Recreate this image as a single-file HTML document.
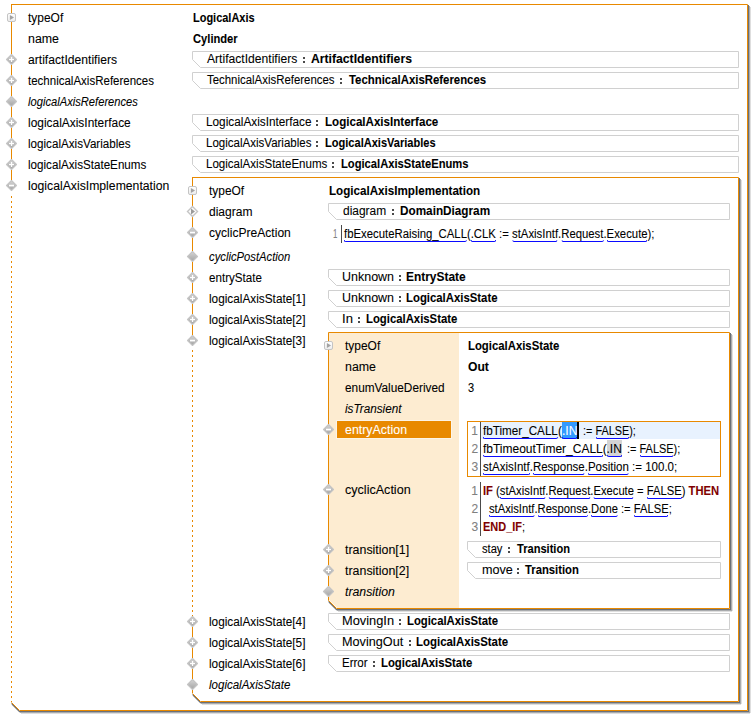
<!DOCTYPE html>
<html><head><meta charset="utf-8"><style>
html,body{margin:0;padding:0;background:#fff;}
body{width:753px;height:720px;position:relative;overflow:hidden;font-family:"Liberation Sans",sans-serif;font-size:12px;color:#000000;}
svg{position:absolute;left:0;top:0;}
.t{position:absolute;line-height:14px;white-space:pre;transform-origin:0 0;-webkit-text-stroke:0.08px currentColor;}
b{font-weight:bold;}
.ln{color:#808080;}
.kw{color:#7f0000;font-weight:bold;}
.wh{color:#fff;}
.u{position:relative;}
.u::after{content:"";position:absolute;left:0;right:0;bottom:-1px;height:1px;border:1px solid #0a0aff;border-top:none;border-radius:0 0 2px 2px;}
.sel{background:#3399ff;color:#fff;}
.cur{display:inline-block;width:2px;height:14px;background:#000;vertical-align:top;}
.occ{background:#d4d4d4;}
</style></head><body>
<svg width="753" height="720"><defs>
<linearGradient id="dg" x1="0" y1="0" x2="0" y2="1"><stop offset="0" stop-color="#d6d6d6"/><stop offset="1" stop-color="#a2a2a2"/></linearGradient>
<linearGradient id="sg" x1="0" y1="0" x2="0" y2="1"><stop offset="0" stop-color="#ffffff"/><stop offset="1" stop-color="#ececec"/></linearGradient>
</defs>
<rect x="748" y="5" width="1" height="707" fill="#6b7077"/><rect x="749" y="6" width="1" height="707" fill="#a9abad"/><rect x="750" y="7" width="1" height="706" fill="#dedede"/><rect x="19" y="711" width="730" height="1" fill="#6b7077"/><rect x="20" y="712" width="730" height="1" fill="#a9abad"/><rect x="21" y="713" width="729" height="1" fill="#dedede"/><path d="M11.5 703.5 L19.5 711.5" stroke="#6b7077" stroke-width="1" fill="none"/><path d="M11.5 704.5 L19.5 712.5" stroke="#bcbcbc" stroke-width="1" fill="none"/><path d="M11.5 4.5 H747.5 V710.5 H19.5 L11.5 702.5 Z" fill="#fff" stroke="none"/><path d="M11.5 4.5 H747.5 V710.5 H19.5 L11.5 702.5" fill="none" stroke="#e88900" stroke-width="1"/><path d="M11.5 4 V190" stroke="#e88900" stroke-width="1" fill="none"/><path d="M11.5 196 V702" stroke="#e88900" stroke-width="1" stroke-dasharray="2 3" fill="none"/><path d="M192.5 59.5 V51.5 H738.5 V67.5 H200.5 Z" fill="#fff" stroke="#d0d0d0" stroke-width="1"/><rect x="303" y="57" width="2" height="2" fill="#4a4a4a"/><rect x="303" y="61" width="2" height="2" fill="#4a4a4a"/><path d="M192.5 80.5 V72.5 H738.5 V88.5 H200.5 Z" fill="#fff" stroke="#d0d0d0" stroke-width="1"/><rect x="340" y="78" width="2" height="2" fill="#4a4a4a"/><rect x="340" y="82" width="2" height="2" fill="#4a4a4a"/><path d="M192.5 122.5 V114.5 H738.5 V130.5 H200.5 Z" fill="#fff" stroke="#d0d0d0" stroke-width="1"/><rect x="316" y="120" width="2" height="2" fill="#4a4a4a"/><rect x="316" y="124" width="2" height="2" fill="#4a4a4a"/><path d="M192.5 143.5 V135.5 H738.5 V151.5 H200.5 Z" fill="#fff" stroke="#d0d0d0" stroke-width="1"/><rect x="316" y="141" width="2" height="2" fill="#4a4a4a"/><rect x="316" y="145" width="2" height="2" fill="#4a4a4a"/><path d="M192.5 164.5 V156.5 H738.5 V172.5 H200.5 Z" fill="#fff" stroke="#d0d0d0" stroke-width="1"/><rect x="332" y="162" width="2" height="2" fill="#4a4a4a"/><rect x="332" y="166" width="2" height="2" fill="#4a4a4a"/><rect x="739" y="178" width="1" height="525" fill="#6b7077"/><rect x="740" y="179" width="1" height="525" fill="#a9abad"/><rect x="741" y="180" width="1" height="524" fill="#dedede"/><rect x="200" y="702" width="540" height="1" fill="#6b7077"/><rect x="201" y="703" width="540" height="1" fill="#a9abad"/><rect x="202" y="704" width="539" height="1" fill="#dedede"/><path d="M192.5 694.5 L200.5 702.5" stroke="#6b7077" stroke-width="1" fill="none"/><path d="M192.5 695.5 L200.5 703.5" stroke="#bcbcbc" stroke-width="1" fill="none"/><path d="M192.5 177.5 H738.5 V701.5 H200.5 L192.5 693.5 Z" fill="#fff" stroke="none"/><path d="M192.5 177.5 H738.5 V701.5 H200.5 L192.5 693.5" fill="none" stroke="#e88900" stroke-width="1"/><path d="M192.5 177 V344" stroke="#e88900" stroke-width="1" fill="none"/><path d="M192.5 350 V617" stroke="#e88900" stroke-width="1" stroke-dasharray="2 3" fill="none"/><path d="M192.5 617 V693" stroke="#e88900" stroke-width="1" fill="none"/><path d="M328.5 211.5 V203.5 H729.5 V219.5 H336.5 Z" fill="#fff" stroke="#d0d0d0" stroke-width="1"/><rect x="392" y="209" width="2" height="2" fill="#4a4a4a"/><rect x="392" y="213" width="2" height="2" fill="#4a4a4a"/><path d="M328.5 277.5 V269.5 H729.5 V285.5 H336.5 Z" fill="#fff" stroke="#d0d0d0" stroke-width="1"/><rect x="399" y="275" width="2" height="2" fill="#4a4a4a"/><rect x="399" y="279" width="2" height="2" fill="#4a4a4a"/><path d="M328.5 298.5 V290.5 H729.5 V306.5 H336.5 Z" fill="#fff" stroke="#d0d0d0" stroke-width="1"/><rect x="399" y="296" width="2" height="2" fill="#4a4a4a"/><rect x="399" y="300" width="2" height="2" fill="#4a4a4a"/><path d="M328.5 319.5 V311.5 H729.5 V327.5 H336.5 Z" fill="#fff" stroke="#d0d0d0" stroke-width="1"/><rect x="358" y="317" width="2" height="2" fill="#4a4a4a"/><rect x="358" y="321" width="2" height="2" fill="#4a4a4a"/><path d="M328.5 621.5 V613.5 H729.5 V629.5 H336.5 Z" fill="#fff" stroke="#d0d0d0" stroke-width="1"/><rect x="399" y="619" width="2" height="2" fill="#4a4a4a"/><rect x="399" y="623" width="2" height="2" fill="#4a4a4a"/><path d="M328.5 642.5 V634.5 H729.5 V650.5 H336.5 Z" fill="#fff" stroke="#d0d0d0" stroke-width="1"/><rect x="409" y="640" width="2" height="2" fill="#4a4a4a"/><rect x="409" y="644" width="2" height="2" fill="#4a4a4a"/><path d="M328.5 663.5 V655.5 H729.5 V671.5 H336.5 Z" fill="#fff" stroke="#d0d0d0" stroke-width="1"/><rect x="373" y="661" width="2" height="2" fill="#4a4a4a"/><rect x="373" y="665" width="2" height="2" fill="#4a4a4a"/><rect x="341" y="225" width="1" height="18" fill="#4a4a4a"/><rect x="730" y="333" width="1" height="277" fill="#6b7077"/><rect x="731" y="334" width="1" height="277" fill="#a9abad"/><rect x="732" y="335" width="1" height="276" fill="#dedede"/><rect x="336" y="609" width="395" height="1" fill="#6b7077"/><rect x="337" y="610" width="395" height="1" fill="#a9abad"/><rect x="338" y="611" width="394" height="1" fill="#dedede"/><path d="M328.5 601.5 L336.5 609.5" stroke="#6b7077" stroke-width="1" fill="none"/><path d="M328.5 602.5 L336.5 610.5" stroke="#bcbcbc" stroke-width="1" fill="none"/><path d="M328.5 332.5 H729.5 V608.5 H336.5 L328.5 600.5 Z" fill="#fff" stroke="none"/><path d="M328.5 600.5 V332.5 H729.5 V608.5 H336.5 L328.5 600.5" fill="none" stroke="#e88900" stroke-width="1"/><path d="M329 333 H459 V608 H337 L329 600 Z" fill="#fdecd1"/><rect x="336" y="420" width="116" height="19" fill="#fdf4e6"/><rect x="337" y="421" width="114" height="17" fill="#e88900"/><rect x="467.5" y="421.5" width="253" height="55" fill="#fff" stroke="#e88900" stroke-width="1"/><rect x="481" y="422" width="239" height="17" fill="#e8f2fe"/><rect x="480" y="422" width="1" height="54" fill="#4a4a4a"/><rect x="562" y="422" width="15" height="17" fill="#3399ff"/><rect x="577" y="422" width="2" height="17" fill="#000"/><rect x="607" y="440" width="15" height="17" fill="#d4d4d4"/><rect x="480" y="482" width="1" height="54" fill="#4a4a4a"/><path d="M467.5 549.5 V541.5 H720.5 V557.5 H475.5 Z" fill="#fff" stroke="#d0d0d0" stroke-width="1"/><rect x="508" y="547" width="2" height="2" fill="#4a4a4a"/><rect x="508" y="551" width="2" height="2" fill="#4a4a4a"/><path d="M467.5 570.5 V562.5 H720.5 V578.5 H475.5 Z" fill="#fff" stroke="#d0d0d0" stroke-width="1"/><rect x="517" y="568" width="2" height="2" fill="#4a4a4a"/><rect x="517" y="572" width="2" height="2" fill="#4a4a4a"/><rect x="7.5" y="13.5" width="8" height="8" rx="1.5" fill="url(#sg)" stroke="#c4c4c4" stroke-width="1"/><polygon points="9.9,15 14,17.5 9.9,20" fill="#a2a2a2"/><polygon points="11.5,54.5 16.5,59.5 11.5,64.5 6.5,59.5" fill="url(#dg)" stroke="#c4c4c4" stroke-width="1.1" stroke-linejoin="round"/><rect x="9.0" y="58.9" width="5" height="1.3" fill="#fff"/><rect x="10.9" y="57.0" width="1.3" height="5" fill="#fff"/><polygon points="11.5,75.5 16.5,80.5 11.5,85.5 6.5,80.5" fill="url(#dg)" stroke="#c4c4c4" stroke-width="1.1" stroke-linejoin="round"/><rect x="9.0" y="79.9" width="5" height="1.3" fill="#fff"/><rect x="10.9" y="78.0" width="1.3" height="5" fill="#fff"/><polygon points="11.5,96.5 16.5,101.5 11.5,106.5 6.5,101.5" fill="url(#dg)" stroke="#c4c4c4" stroke-width="1.1" stroke-linejoin="round"/><polygon points="11.5,117.5 16.5,122.5 11.5,127.5 6.5,122.5" fill="url(#dg)" stroke="#c4c4c4" stroke-width="1.1" stroke-linejoin="round"/><rect x="9.0" y="121.9" width="5" height="1.3" fill="#fff"/><rect x="10.9" y="120.0" width="1.3" height="5" fill="#fff"/><polygon points="11.5,138.5 16.5,143.5 11.5,148.5 6.5,143.5" fill="url(#dg)" stroke="#c4c4c4" stroke-width="1.1" stroke-linejoin="round"/><rect x="9.0" y="142.9" width="5" height="1.3" fill="#fff"/><rect x="10.9" y="141.0" width="1.3" height="5" fill="#fff"/><polygon points="11.5,159.5 16.5,164.5 11.5,169.5 6.5,164.5" fill="url(#dg)" stroke="#c4c4c4" stroke-width="1.1" stroke-linejoin="round"/><rect x="9.0" y="163.9" width="5" height="1.3" fill="#fff"/><rect x="10.9" y="162.0" width="1.3" height="5" fill="#fff"/><polygon points="11.5,180.5 16.5,185.5 11.5,190.5 6.5,185.5" fill="url(#dg)" stroke="#c4c4c4" stroke-width="1.1" stroke-linejoin="round"/><rect x="9.0" y="184.7" width="5" height="1.7" fill="#fff"/><rect x="188.5" y="186.5" width="8" height="8" rx="1.5" fill="url(#sg)" stroke="#c4c4c4" stroke-width="1"/><polygon points="190.9,188 195,190.5 190.9,193" fill="#a2a2a2"/><polygon points="192.5,206.5 197.5,211.5 192.5,216.5 187.5,211.5" fill="#fbfbfb" stroke="#c4c4c4" stroke-width="1.4"/><polygon points="191.0,208.5 195.0,211.5 191.0,214.5" fill="#9a9a9a"/><polygon points="192.5,227.5 197.5,232.5 192.5,237.5 187.5,232.5" fill="url(#dg)" stroke="#c4c4c4" stroke-width="1.1" stroke-linejoin="round"/><rect x="190.0" y="231.7" width="5" height="1.7" fill="#fff"/><polygon points="192.5,251.5 197.5,256.5 192.5,261.5 187.5,256.5" fill="url(#dg)" stroke="#c4c4c4" stroke-width="1.1" stroke-linejoin="round"/><polygon points="192.5,272.5 197.5,277.5 192.5,282.5 187.5,277.5" fill="url(#dg)" stroke="#c4c4c4" stroke-width="1.1" stroke-linejoin="round"/><rect x="190.0" y="276.9" width="5" height="1.3" fill="#fff"/><rect x="191.9" y="275.0" width="1.3" height="5" fill="#fff"/><polygon points="192.5,293.5 197.5,298.5 192.5,303.5 187.5,298.5" fill="url(#dg)" stroke="#c4c4c4" stroke-width="1.1" stroke-linejoin="round"/><rect x="190.0" y="297.9" width="5" height="1.3" fill="#fff"/><rect x="191.9" y="296.0" width="1.3" height="5" fill="#fff"/><polygon points="192.5,314.5 197.5,319.5 192.5,324.5 187.5,319.5" fill="url(#dg)" stroke="#c4c4c4" stroke-width="1.1" stroke-linejoin="round"/><rect x="190.0" y="318.9" width="5" height="1.3" fill="#fff"/><rect x="191.9" y="317.0" width="1.3" height="5" fill="#fff"/><polygon points="192.5,335.5 197.5,340.5 192.5,345.5 187.5,340.5" fill="url(#dg)" stroke="#c4c4c4" stroke-width="1.1" stroke-linejoin="round"/><rect x="190.0" y="339.7" width="5" height="1.7" fill="#fff"/><polygon points="192.5,616.5 197.5,621.5 192.5,626.5 187.5,621.5" fill="url(#dg)" stroke="#c4c4c4" stroke-width="1.1" stroke-linejoin="round"/><rect x="190.0" y="620.9" width="5" height="1.3" fill="#fff"/><rect x="191.9" y="619.0" width="1.3" height="5" fill="#fff"/><polygon points="192.5,637.5 197.5,642.5 192.5,647.5 187.5,642.5" fill="url(#dg)" stroke="#c4c4c4" stroke-width="1.1" stroke-linejoin="round"/><rect x="190.0" y="641.9" width="5" height="1.3" fill="#fff"/><rect x="191.9" y="640.0" width="1.3" height="5" fill="#fff"/><polygon points="192.5,658.5 197.5,663.5 192.5,668.5 187.5,663.5" fill="url(#dg)" stroke="#c4c4c4" stroke-width="1.1" stroke-linejoin="round"/><rect x="190.0" y="662.9" width="5" height="1.3" fill="#fff"/><rect x="191.9" y="661.0" width="1.3" height="5" fill="#fff"/><polygon points="192.5,679.5 197.5,684.5 192.5,689.5 187.5,684.5" fill="url(#dg)" stroke="#c4c4c4" stroke-width="1.1" stroke-linejoin="round"/><rect x="324.5" y="341.5" width="8" height="8" rx="1.5" fill="url(#sg)" stroke="#c4c4c4" stroke-width="1"/><polygon points="326.9,343 331,345.5 326.9,348" fill="#a2a2a2"/><polygon points="328.5,424.5 333.5,429.5 328.5,434.5 323.5,429.5" fill="url(#dg)" stroke="#c4c4c4" stroke-width="1.1" stroke-linejoin="round"/><rect x="326.0" y="428.7" width="5" height="1.7" fill="#fff"/><polygon points="328.5,484.5 333.5,489.5 328.5,494.5 323.5,489.5" fill="url(#dg)" stroke="#c4c4c4" stroke-width="1.1" stroke-linejoin="round"/><rect x="326.0" y="488.7" width="5" height="1.7" fill="#fff"/><polygon points="328.5,544.5 333.5,549.5 328.5,554.5 323.5,549.5" fill="url(#dg)" stroke="#c4c4c4" stroke-width="1.1" stroke-linejoin="round"/><rect x="326.0" y="548.9" width="5" height="1.3" fill="#fff"/><rect x="327.9" y="547.0" width="1.3" height="5" fill="#fff"/><polygon points="328.5,565.5 333.5,570.5 328.5,575.5 323.5,570.5" fill="url(#dg)" stroke="#c4c4c4" stroke-width="1.1" stroke-linejoin="round"/><rect x="326.0" y="569.9" width="5" height="1.3" fill="#fff"/><rect x="327.9" y="568.0" width="1.3" height="5" fill="#fff"/><polygon points="328.5,586.5 333.5,591.5 328.5,596.5 323.5,591.5" fill="url(#dg)" stroke="#c4c4c4" stroke-width="1.1" stroke-linejoin="round"/>
</svg>
<div class="t" style="left:192.61px;top:11px;transform:scaleX(0.9147);"><b>LogicalAxis</b></div><div class="t" style="left:192.83px;top:32px;transform:scaleX(0.9305);"><b>Cylinder</b></div><div class="t" style="left:207.30px;top:52px;transform:scaleX(1.0101);">ArtifactIdentifiers</div><div class="t" style="left:310.95px;top:52px;transform:scaleX(1.0157);"><b>ArtifactIdentifiers</b></div><div class="t" style="left:207.06px;top:73px;transform:scaleX(0.9513);">TechnicalAxisReferences</div><div class="t" style="left:349.10px;top:73px;transform:scaleX(0.9486);"><b>TechnicalAxisReferences</b></div><div class="t" style="left:206.42px;top:115px;transform:scaleX(0.9830);">LogicalAxisInterface</div><div class="t" style="left:324.58px;top:115px;transform:scaleX(0.9652);"><b>LogicalAxisInterface</b></div><div class="t" style="left:206.44px;top:136px;transform:scaleX(0.9604);">LogicalAxisVariables</div><div class="t" style="left:324.61px;top:136px;transform:scaleX(0.9213);"><b>LogicalAxisVariables</b></div><div class="t" style="left:206.44px;top:157px;transform:scaleX(0.9627);">LogicalAxisStateEnums</div><div class="t" style="left:341.00px;top:157px;transform:scaleX(0.9328);"><b>LogicalAxisStateEnums</b></div><div class="t" style="left:328.87px;top:184px;transform:scaleX(0.9689);"><b>LogicalAxisImplementation</b></div><div class="t" style="left:343.30px;top:204px;transform:scaleX(0.9964);">diagram</div><div class="t" style="left:399.97px;top:204px;transform:scaleX(0.9790);"><b>DomainDiagram</b></div><div class="t" style="left:342.26px;top:270px;transform:scaleX(1.0404);">Unknown</div><div class="t" style="left:406.46px;top:270px;transform:scaleX(0.9932);"><b>EntryState</b></div><div class="t" style="left:342.26px;top:291px;transform:scaleX(1.0404);">Unknown</div><div class="t" style="left:406.49px;top:291px;transform:scaleX(0.9466);"><b>LogicalAxisState</b></div><div class="t" style="left:342.21px;top:312px;transform:scaleX(1.0909);">In</div><div class="t" style="left:365.99px;top:312px;transform:scaleX(0.9445);"><b>LogicalAxisState</b></div><div class="t" style="left:342.23px;top:614px;transform:scaleX(1.0681);">MovingIn</div><div class="t" style="left:406.89px;top:614px;transform:scaleX(0.9424);"><b>LogicalAxisState</b></div><div class="t" style="left:342.25px;top:635px;transform:scaleX(1.0544);">MovingOut</div><div class="t" style="left:415.89px;top:635px;transform:scaleX(0.9529);"><b>LogicalAxisState</b></div><div class="t" style="left:342.34px;top:656px;transform:scaleX(0.9608);">Error</div><div class="t" style="left:380.89px;top:656px;transform:scaleX(0.9435);"><b>LogicalAxisState</b></div><div class="t" style="left:332.91px;top:227px;transform:scaleX(0.6545);"><span class="ln">1</span></div><div class="t" style="left:344.16px;top:227px;transform:scaleX(0.9451);"><span class="u">fbExecuteRaising_CALL</span>(<span class="u">.CLK</span> := <span class="u">stAxisIntf</span>.<span class="u">Request</span>.<span class="u">Execute</span>);</div><div class="t" style="left:467.79px;top:339px;transform:scaleX(0.9455);"><b>LogicalAxisState</b></div><div class="t" style="left:468.00px;top:360px;transform:scaleX(1.0100);"><b>Out</b></div><div class="t" style="left:468.14px;top:381px;transform:scaleX(0.9217);">3</div><div class="t" style="left:471.25px;top:424px;"><span class="ln">1</span></div><div class="t" style="left:471.50px;top:442px;"><span class="ln">2</span></div><div class="t" style="left:471.50px;top:460px;"><span class="ln">3</span></div><div class="t" style="left:482.96px;top:424px;transform:scaleX(0.9734);"><span class="u">fbTimer_CALL</span>(</div><div class="t" style="left:561.59px;top:424px;transform:scaleX(1.0074);"><span class="wh"><span class="u">.IN</span></span></div><div class="t" style="left:582.80px;top:424px;transform:scaleX(0.9044);">:= <span class="u">FALSE</span>);</div><div class="t" style="left:482.95px;top:442px;"><span class="u">fbTimeoutTimer_CALL</span>(</div><div class="t" style="left:606.50px;top:442px;"><span class="u">.IN</span></div><div class="t" style="left:626.89px;top:442px;transform:scaleX(0.9133);">:= <span class="u">FALSE</span>);</div><div class="t" style="left:482.96px;top:460px;transform:scaleX(0.9590);"><span class="u">stAxisIntf</span>.<span class="u">Response</span>.<span class="u">Position</span> := 100.0;</div><div class="t" style="left:471.25px;top:484px;"><span class="ln">1</span></div><div class="t" style="left:471.50px;top:502px;"><span class="ln">2</span></div><div class="t" style="left:471.50px;top:520px;"><span class="ln">3</span></div><div class="t" style="left:483.10px;top:484px;transform:scaleX(0.9351);"><span class="kw">IF</span> (<span class="u">stAxisIntf</span>.<span class="u">Request</span>.<span class="u">Execute</span> = <span class="u">FALSE</span>) <span class="kw">THEN</span></div><div class="t" style="left:489.27px;top:502px;transform:scaleX(0.9332);"><span class="u">stAxisIntf</span>.<span class="u">Response</span>.<span class="u">Done</span> := <span class="u">FALSE</span>;</div><div class="t" style="left:483.12px;top:520px;transform:scaleX(0.9130);"><span class="kw">END_IF</span>;</div><div class="t" style="left:482.07px;top:542px;transform:scaleX(0.9287);">stay</div><div class="t" style="left:517.00px;top:542px;transform:scaleX(0.9233);"><b>Transition</b></div><div class="t" style="left:481.51px;top:563px;transform:scaleX(1.0513);">move</div><div class="t" style="left:525.40px;top:563px;transform:scaleX(0.9374);"><b>Transition</b></div><div class="t" style="left:28.25px;top:11px;transform:scaleX(0.9957);">typeOf</div><div class="t" style="left:27.73px;top:32px;transform:scaleX(1.0330);">name</div><div class="t" style="left:27.99px;top:53px;transform:scaleX(1.0109);">artifactIdentifiers</div><div class="t" style="left:28.26px;top:74px;transform:scaleX(0.9591);">technicalAxisReferences</div><div class="t" style="left:28.27px;top:95px;transform:scaleX(0.9311);"><i>logicalAxisReferences</i></div><div class="t" style="left:27.75px;top:116px;transform:scaleX(0.9936);">logicalAxisInterface</div><div class="t" style="left:27.77px;top:137px;transform:scaleX(0.9699);">logicalAxisVariables</div><div class="t" style="left:27.77px;top:158px;transform:scaleX(0.9694);">logicalAxisStateEnums</div><div class="t" style="left:27.74px;top:179px;transform:scaleX(1.0186);">logicalAxisImplementation</div><div class="t" style="left:209.35px;top:184px;transform:scaleX(0.9929);">typeOf</div><div class="t" style="left:209.10px;top:205px;transform:scaleX(1.0036);">diagram</div><div class="t" style="left:209.10px;top:226px;transform:scaleX(1.0056);">cyclicPreAction</div><div class="t" style="left:209.37px;top:250px;transform:scaleX(0.9384);"><i>cyclicPostAction</i></div><div class="t" style="left:209.12px;top:271px;transform:scaleX(0.9674);">entryState</div><div class="t" style="left:208.86px;top:292px;transform:scaleX(0.9834);">logicalAxisState[1]</div><div class="t" style="left:208.86px;top:313px;transform:scaleX(0.9834);">logicalAxisState[2]</div><div class="t" style="left:208.86px;top:334px;transform:scaleX(0.9834);">logicalAxisState[3]</div><div class="t" style="left:208.86px;top:615px;transform:scaleX(0.9834);">logicalAxisState[4]</div><div class="t" style="left:208.86px;top:636px;transform:scaleX(0.9834);">logicalAxisState[5]</div><div class="t" style="left:208.86px;top:657px;transform:scaleX(0.9834);">logicalAxisState[6]</div><div class="t" style="left:209.36px;top:678px;transform:scaleX(0.9607);"><i>logicalAxisState</i></div><div class="t" style="left:345.05px;top:339px;transform:scaleX(0.9957);">typeOf</div><div class="t" style="left:344.53px;top:360px;transform:scaleX(1.0330);">name</div><div class="t" style="left:344.81px;top:381px;transform:scaleX(0.9840);">enumValueDerived</div><div class="t" style="left:345.06px;top:402px;transform:scaleX(0.9776);"><i>isTransient</i></div><div class="t" style="left:344.78px;top:423px;transform:scaleX(1.0332);"><span class="wh">entryAction</span></div><div class="t" style="left:344.78px;top:483px;transform:scaleX(1.0472);">cyclicAction</div><div class="t" style="left:345.04px;top:543px;transform:scaleX(1.0344);">transition[1]</div><div class="t" style="left:345.04px;top:564px;transform:scaleX(1.0344);">transition[2]</div><div class="t" style="left:344.79px;top:585px;transform:scaleX(1.0241);"><i>transition</i></div>
</body></html>
